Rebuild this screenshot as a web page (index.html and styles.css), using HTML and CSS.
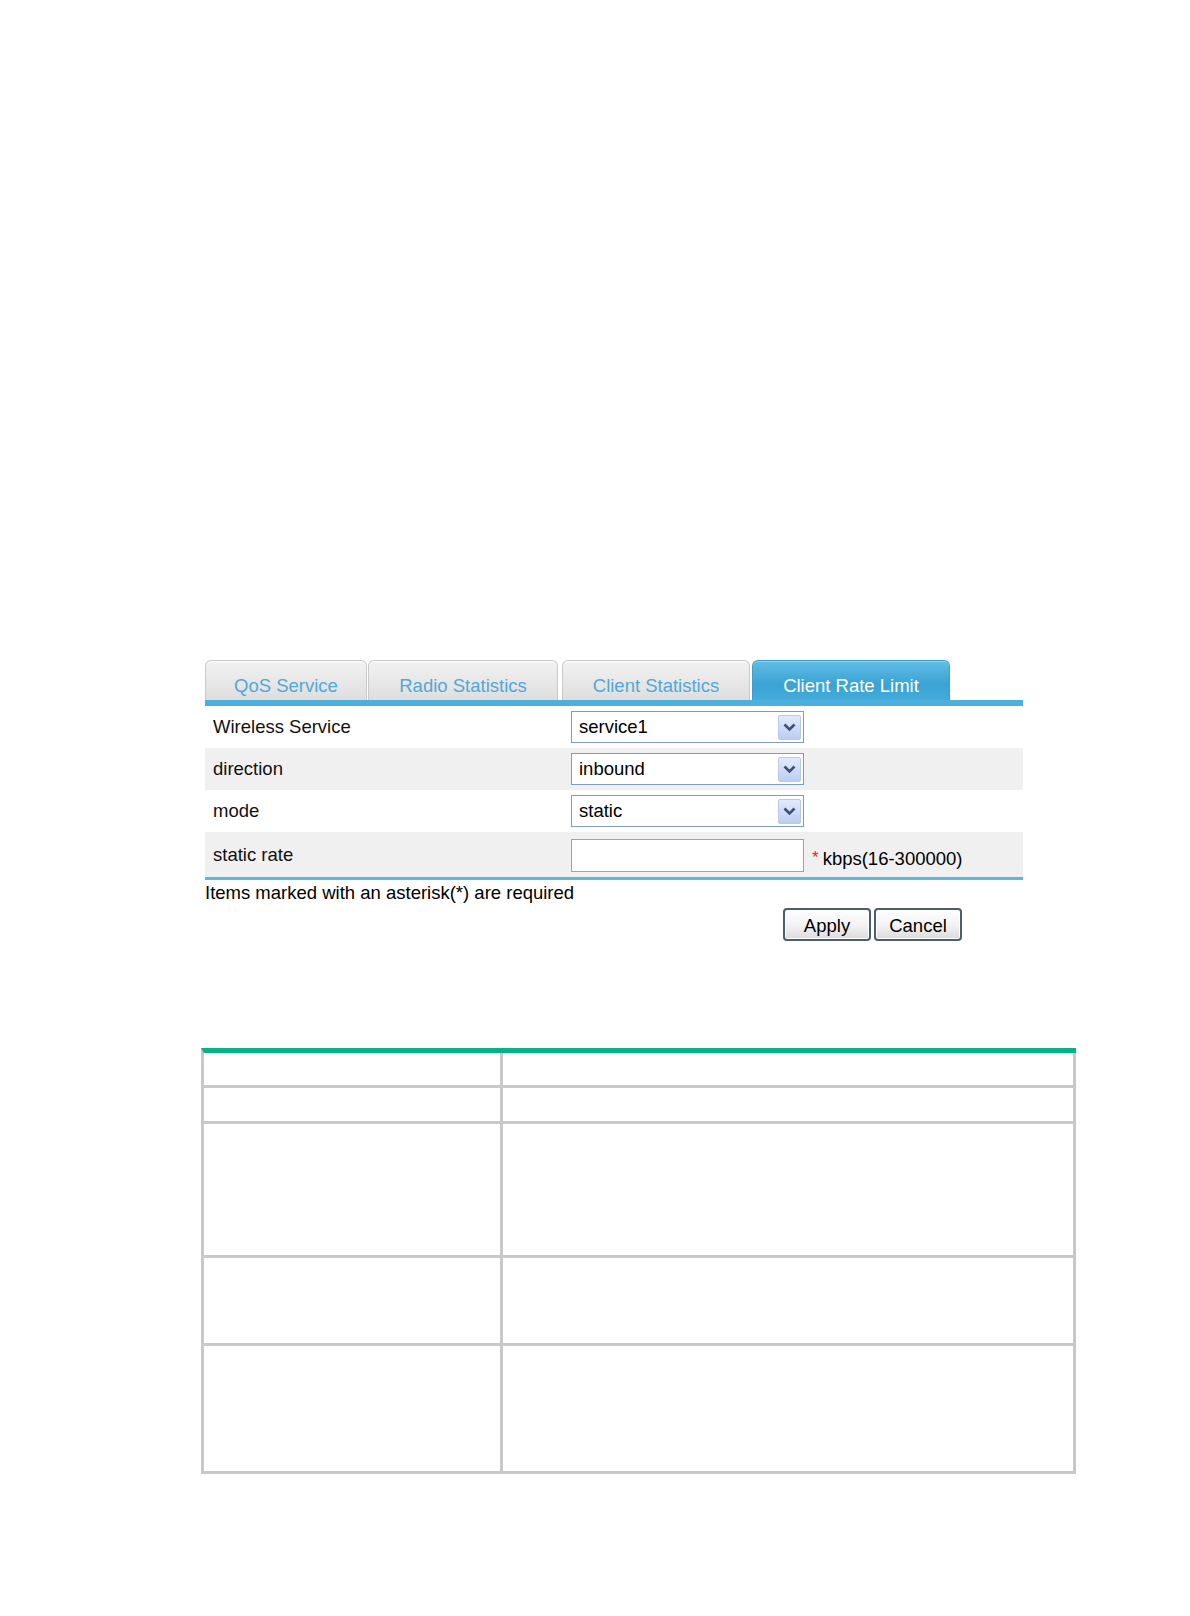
FILE: index.html
```html
<!DOCTYPE html>
<html lang="en">
<head>
<meta charset="utf-8">
<title>Client Rate Limit</title>
<link rel="stylesheet" href="styles.css">
</head>
<body>
<div class="page">
  <div class="panel">
    <div class="tabs">
      <div class="tab t1">QoS Service</div>
      <div class="tab t2">Radio Statistics</div>
      <div class="tab t3">Client Statistics</div>
      <div class="tab t4 active">Client Rate Limit</div>
    </div>
    <div class="form">
      <div class="row">
        <div class="label">Wireless Service</div>
        <div class="field">
          <div class="select"><span class="val">service1</span><span class="drop"><svg width="13" height="9" viewBox="0 0 13 9"><path d="M1.5 1.5 L6.5 6.5 L11.5 1.5" fill="none" stroke="#3d4f78" stroke-width="2.6"/></svg></span></div>
        </div>
      </div>
      <div class="row alt">
        <div class="label">direction</div>
        <div class="field">
          <div class="select"><span class="val">inbound</span><span class="drop"><svg width="13" height="9" viewBox="0 0 13 9"><path d="M1.5 1.5 L6.5 6.5 L11.5 1.5" fill="none" stroke="#3d4f78" stroke-width="2.6"/></svg></span></div>
        </div>
      </div>
      <div class="row">
        <div class="label">mode</div>
        <div class="field">
          <div class="select"><span class="val">static</span><span class="drop"><svg width="13" height="9" viewBox="0 0 13 9"><path d="M1.5 1.5 L6.5 6.5 L11.5 1.5" fill="none" stroke="#3d4f78" stroke-width="2.6"/></svg></span></div>
        </div>
      </div>
      <div class="row alt last">
        <div class="label">static rate</div>
        <div class="field">
          <div class="input"></div>
          <span class="req">*</span>
          <span class="unit">kbps(16-300000)</span>
        </div>
      </div>
    </div>
    <div class="note">Items marked with an asterisk(*) are required</div>
    <div class="actions">
      <button class="btn">Apply</button>
      <button class="btn">Cancel</button>
    </div>
  </div>

  <div class="spec">
    <div class="cell c1 r1"></div><div class="cell c2 r1"></div>
    <div class="cell c1 r2"></div><div class="cell c2 r2"></div>
    <div class="cell c1 r3"></div><div class="cell c2 r3"></div>
    <div class="cell c1 r4"></div><div class="cell c2 r4"></div>
    <div class="cell c1 r5"></div><div class="cell c2 r5"></div>
  </div>
</div>
</body>
</html>
```

FILE: styles.css
```css
* { box-sizing: border-box; }
html, body { margin: 0; padding: 0; background: #fff; }
body {
  font-family: "Liberation Sans", Arial, sans-serif;
  font-size: 18.5px;
  color: #111;
}
.page {
  width: 1190px;
  height: 1616px;
  padding-top: 660px;
}
.panel {
  margin-left: 205px;
  width: 818px;
}
.tabs {
  display: flex;
  align-items: flex-end;
  height: 46px;
  border-bottom: 6px solid #4cb0dc;
  box-shadow: 0 1px 0 #a9d9ef;
}
.tab {
  height: 40px;
  padding-top: 14px;
  line-height: 22px;
  text-align: center;
  color: #52a8d8;
  background: linear-gradient(#f2f2f2, #dedede);
  border: 1px solid #c9c9c9;
  border-bottom: none;
  border-radius: 6px 6px 0 0;
  box-shadow: inset 0 1px 0 #fff;
}
.t1 { width: 162px; }
.t2 { width: 190px; margin-left: 1px; }
.t3 { width: 188px; margin-left: 4px; }
.t4 { width: 198px; margin-left: 2px; }
.tab.active {
  color: #fff;
  background: linear-gradient(#62bde3, #3aa3d4 60%, #44abda);
  border-color: #3d9fcf;
  box-shadow: inset 0 1px 0 #8fd2ee;
}
.form {
  border-bottom: 3px solid #5db5e0;
}
.row {
  display: flex;
  align-items: center;
  height: 42px;
  background: #fff;
}
.row.alt { background: #f0f0f0; }
.row.last { height: 45px; }
.label {
  width: 366px;
  padding-left: 8px;
  line-height: 22px;
}
.field {
  display: flex;
  align-items: center;
}
.select {
  position: relative;
  width: 233px;
  height: 32px;
  border: 1px solid #7f9db9;
  background: #fff;
  display: flex;
  align-items: center;
}
.val {
  padding-left: 7px;
  color: #000;
  line-height: 22px;
}
.drop {
  position: absolute;
  right: 2px;
  top: 3px;
  width: 23px;
  height: 25px;
  border: 1px solid #b9c9ee;
  border-radius: 2px;
  background: linear-gradient(#e2eafc, #bccdf3);
  display: flex;
  align-items: center;
  justify-content: center;
}
.input {
  width: 233px;
  height: 33px;
  border: 1px solid #8fa6bd;
  background: #fff;
  margin-top: 1px;
}
.req {
  color: #e4242b;
  margin-left: 8px;
  margin-top: 6px;
  font-size: 17px;
}
.unit {
  margin-left: 4px;
  margin-top: 9px;
  color: #000;
}
.note {
  line-height: 24px;
  margin-top: 1px;
  color: #000;
}
.actions {
  display: flex;
  margin-top: 3px;
  padding-left: 578px;
  gap: 3px;
}
.btn {
  font-family: "Liberation Sans", Arial, sans-serif;
  font-size: 18.5px;
  color: #000;
  height: 33px;
  padding: 3px 0 0;
  border: 2px solid #4d5d70;
  border-radius: 4px;
  background: linear-gradient(#ffffff, #f2f2f2 55%, #dcdcdc);
  box-shadow: inset 0 0 0 1px #fff;
}
.btn:first-child { width: 88px; }
.btn:last-child { width: 88px; }

.spec {
  margin-left: 201px;
  margin-top: 107px;
  width: 875px;
  display: grid;
  grid-template-columns: 299px 573px;
  border-top: 5px solid #08b187;
  border-left: 3px solid #c8c8c8;
}
.cell {
  border-right: 3px solid #c8c8c8;
  border-bottom: 3px solid #c8c8c8;
  background: #fff;
}
.r1 { height: 35px; }
.r2 { height: 36px; }
.r3 { height: 134px; }
.r4 { height: 88px; }
.r5 { height: 128px; }
```
